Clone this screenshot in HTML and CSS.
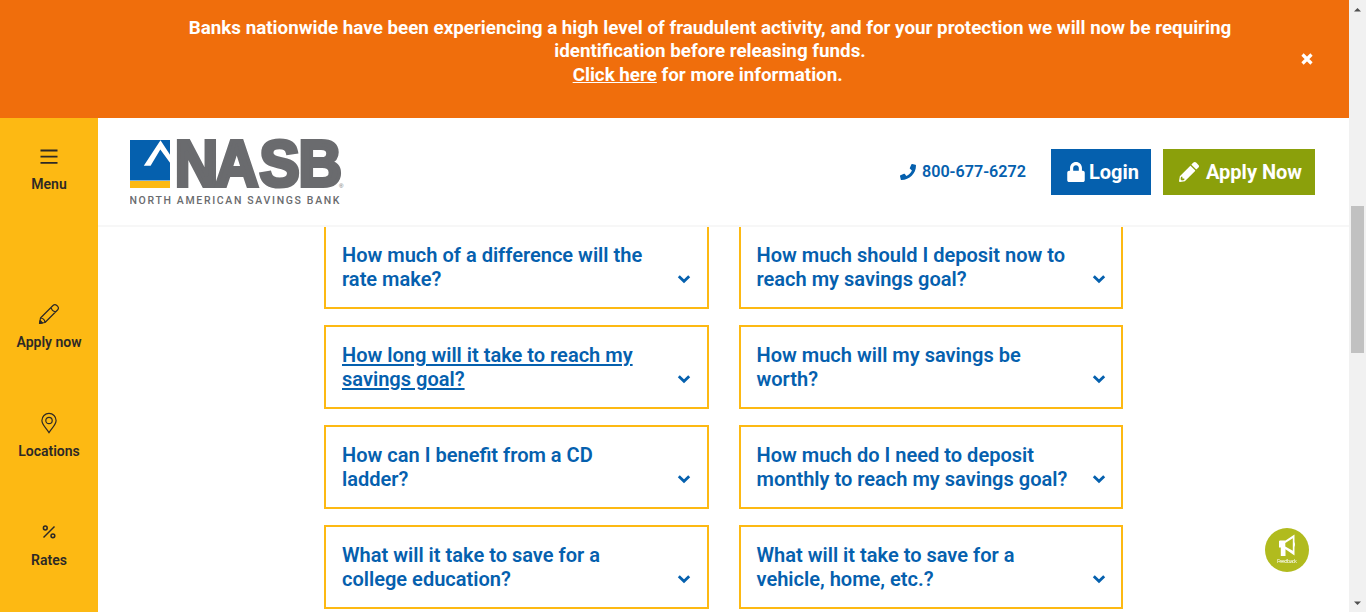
FILE: index.html
```
<!DOCTYPE html>
<html lang="en">
<head>
<meta charset="utf-8">
<title>NASB - North American Savings Bank</title>
<link rel="stylesheet" href="styles.css">
</head>
<body>
<svg class="defs" width="0" height="0">
  <symbol id="chevron" viewBox="0 0 14 10"><path d="M1.800 2.200 7 7.300l5.200-5.100" fill="none" stroke="currentColor" stroke-width="2.800"/></symbol>
</svg>
<div class="page">
  <div class="alert">
    <p class="alert-text">Banks nationwide have been experiencing a high level of fraudulent activity, and for your protection we will now be requiring<br>identification before releasing funds.<br><a class="alert-link" href="#">Click here</a> for more information.&nbsp;</p>
    <button class="alert-close" aria-label="Close"><svg width="12" height="12" viewBox="0 0 12 12"><path d="M1.500 1.500l9 9M10.500 1.500l-9 9" stroke="#fff" stroke-width="3.200"/></svg></button>
  </div>
  <div class="body">
    <nav class="side">
      <a class="side-item side-menu" href="#">
        <svg width="18" height="16" viewBox="0 0 18 16"><path d="M0.500 1.500h17M0.500 7.700h17M0.500 13.900h17" stroke="#2d2926" stroke-width="1.800"/></svg>
        <span>Menu</span>
      </a>
      <a class="side-item" href="#">
        <svg class="side-icon" viewBox="0 0 22 22" fill="none" stroke="#2d2926" stroke-width="1.200" stroke-linejoin="round"><path d="M1.500 20.500l1-5.500L15 2.500a2.700 2.700 0 0 1 3.800 0l.7.700a2.700 2.700 0 0 1 0 3.800L7 19.500zM13.200 4.300c.2 2.600 1.900 4.300 4.500 4.500M2.500 15c2.600.2 4.300 1.900 4.500 4.500"/><path d="M2.100 17.500l2.400 2.400-3 .6z" fill="#2d2926"/></svg>
        <span>Apply now</span>
      </a>
      <a class="side-item" href="#">
        <svg class="side-icon" viewBox="0 0 22 22" fill="none" stroke="#2d2926" stroke-width="1.200"><path d="M11 20.600C8 16 3.900 12.500 3.900 8.500a7.100 7.100 0 0 1 14.200 0c0 4-4.100 7.500-7.100 12.100z"/><circle cx="11" cy="8.500" r="3.200"/></svg>
        <span>Locations</span>
      </a>
      <a class="side-item" href="#">
        <svg class="side-icon" viewBox="0 0 22 22" fill="none" stroke="#2d2926" stroke-width="1.500"><path d="M5.500 16.500l11-11"/><circle cx="7.300" cy="7" r="1.900"/><circle cx="14.900" cy="14.800" r="1.900"/></svg>
        <span>Rates</span>
      </a>
    </nav>
    <div class="main">
      <header class="header">
        <a class="logo" href="#">
          <svg width="216" height="72" viewBox="0 0 216 72">
            <path d="M0 3h40v40.500H0z" fill="#0560ae"/><path d="M0 43.900h40v7H0z" fill="#fdb913"/>
            <path d="M13.800 28.800L30.500 3.200 40 17.800V25.800L30.300 12.500 20.600 28.800z" fill="#fff"/>
            <text class="logo-name" transform="scale(.94 1)" x="47.700 90.400 137.800 179.300" y="49">NASB</text>
            <text class="logo-reg" x="209" y="51">®</text>
            <text class="logo-tag" x="-0.500" y="67" textLength="210">NORTH AMERICAN SAVINGS BANK</text>
          </svg>
        </a>
        <div class="actions">
          <a class="phone" href="#"><svg width="16" height="16" viewBox="0 0 512 512" fill="currentColor"><path d="M493.400 24.600l-104-24c-11.300-2.600-22.900 3.300-27.500 13.900l-48 112c-4.200 9.800-1.400 21.300 6.900 28l60.600 49.600c-36 76.700-98.900 140.500-177.200 177.200l-49.600-60.600c-6.800-8.300-18.200-11.100-28-6.900l-112 48C3.900 366.500-2 378.100.6 389.400l24 104C27.100 504.200 36.700 512 48 512c256.100 0 464-207.500 464-464 0-11.200-7.700-20.900-18.600-23.400z"/></svg><span>800-677-6272</span></a>
          <a class="btn btn-login" href="#"><svg width="18" height="20" viewBox="0 0 448 512" fill="currentColor"><path d="M400 224h-24v-72C376 68.200 307.800 0 224 0S72 68.200 72 152v72H48c-26.500 0-48 21.500-48 48v192c0 26.500 21.500 48 48 48h352c26.500 0 48-21.500 48-48V272c0-26.500-21.500-48-48-48zm-104 0H152v-72c0-39.700 32.300-72 72-72s72 32.300 72 72v72z"/></svg><span>Login</span></a>
          <a class="btn btn-apply" href="#"><svg width="20" height="20" viewBox="0 0 512 512" fill="currentColor"><path d="M497.900 142.100l-46.100 46.100c-4.700 4.700-12.300 4.700-17 0l-111-111c-4.700-4.700-4.700-12.300 0-17l46.100-46.100c18.700-18.700 49.100-18.700 67.900 0l60.100 60.100c18.800 18.700 18.800 49.100 0 67.900zM284.200 99.800L21.600 362.400.4 483.900c-2.900 16.400 11.400 30.600 27.800 27.800l121.500-21.300 262.600-262.600c4.700-4.700 4.700-12.300 0-17l-111-111c-4.800-4.700-12.400-4.700-17.100 0zM88 424h48v36.300l-64.500 11.300-31.100-31.100L51.700 376H88v48z"/></svg><span>Apply Now</span></a>
        </div>
      </header>
      <div class="faq">
        <a class="card card-first" href="#"><span>How much of a difference will the<br>rate make?</span><svg class="chev"><use href="#chevron"/></svg></a>
        <a class="card card-first" href="#"><span>How much should I deposit now to<br>reach my savings goal?</span><svg class="chev"><use href="#chevron"/></svg></a>
        <a class="card card-active" href="#"><span>How long will it take to reach my<br>savings goal?</span><svg class="chev"><use href="#chevron"/></svg></a>
        <a class="card" href="#"><span>How much will my savings be<br>worth?</span><svg class="chev"><use href="#chevron"/></svg></a>
        <a class="card" href="#"><span>How can I benefit from a CD<br>ladder?</span><svg class="chev"><use href="#chevron"/></svg></a>
        <a class="card" href="#"><span>How much do I need to deposit<br>monthly to reach my savings goal?</span><svg class="chev"><use href="#chevron"/></svg></a>
        <a class="card" href="#"><span>What will it take to save for a<br>college education?</span><svg class="chev"><use href="#chevron"/></svg></a>
        <a class="card" href="#"><span>What will it take to save for a<br>vehicle, home, etc.?</span><svg class="chev"><use href="#chevron"/></svg></a>
      </div>
    </div>
  </div>
</div>
<div class="scrollbar">
  <svg width="9" height="5" viewBox="0 0 9 5"><path d="M1 4.500L4.500 1 8 4.500z" fill="#505050"/></svg>
  <div class="thumb"></div>
  <svg class="arrow-down" width="9" height="5" viewBox="0 0 9 5"><path d="M1 .5L4.500 4 8 .5z" fill="#505050"/></svg>
</div>
<a class="feedback" href="#">
  <svg width="44" height="44" viewBox="0 0 44 44">
    <circle cx="22" cy="22" r="22" fill="#b1bb1e"/>
    <path d="M15 12.500h5.500L29.500 6.500V27.500L20.500 21.200V28H15.800V19.500H14V13z" fill="#fff"/>
    <path d="M20.300 15l7.500-4.700v12.500L20.300 18.500z" fill="#b1bb1e"/><path d="M29 14q2 2.500 0 5z" fill="#fff"/>
    <text class="feedback-text" x="12" y="35" textLength="20">Feedback</text>
  </svg>
</a>
</body>
</html>
```
FILE: styles.css
```
* { box-sizing: border-box; }
body {
  margin: 0;
  height: 612px;
  display: flex;
  overflow: hidden;
  background: #fff;
  font-family: Roboto, "Liberation Sans", sans-serif;
}
a { color: inherit; text-decoration: none; }
svg { display: block; flex: none; }
.defs { position: absolute; }
.page { width: 1349px; height: 612px; display: flex; flex-direction: column; }

.alert {
  height: 118px;
  flex: none;
  display: flex;
  padding: 16px 36px 0 119px;
  background: #f06e0c;
  color: #fff;
}
.alert-text {
  flex: 1;
  margin: 0;
  font-size: 18.800px;
  font-weight: 700;
  line-height: 23.500px;
  padding-top: 0.500px;
  text-align: center;
  white-space: nowrap;
}
.alert-link { text-decoration: underline; }
.alert-close { border: 0; padding: 0; margin-top: 37px; height: 12px; background: none; }

.body { flex: 1; min-height: 0; display: flex; }
.side {
  width: 98px;
  flex: none;
  display: flex;
  flex-direction: column;
  padding-top: 31px;
  background: #fdb913;
  color: #2d2926;
  font-size: 14px;
  font-weight: 600;
  line-height: 18px;
}
.side-item {
  height: 109px;
  flex: none;
  display: flex;
  flex-direction: column;
  align-items: center;
  gap: 8px;
}
.side-icon { width: 22px; height: 22px; }
.side-menu { height: 154px; gap: 10px; }

.main { flex: 1; display: flex; flex-direction: column; min-width: 0; }
.header {
  height: 109px;
  flex: none;
  display: flex;
  justify-content: space-between;
  padding: 19px 34px 0 32px;
  border-bottom: 2px solid #f7f7f7;
}
.logo-name { font: 700 64px "Liberation Sans", sans-serif; fill: #6a6b6e; stroke: #6a6b6e; stroke-width: 4px; }
.logo-reg { font: 6px "Liberation Sans", sans-serif; fill: #6a6b6e; }
.logo-tag { font: 500 10.500px Roboto, sans-serif; fill: #6a6b6e; }
.actions { display: flex; align-items: center; height: 46px; margin-top: 12px; }
.phone {
  display: flex;
  align-items: center;
  gap: 6px;
  margin-right: 25px;
  color: #0560ae;
  font-size: 16.150px;
  font-weight: 600;
  line-height: 20px;
  padding-bottom: 1px;
}
.btn {
  display: flex;
  align-items: center;
  height: 46px;
  color: #fff;
  font-size: 20px;
  font-weight: 700;
}
.btn-login { width: 100px; padding-left: 16px; gap: 4px; margin-right: 12px; background: #0560ae; }
.btn-apply { width: 152px; padding-left: 16px; gap: 7px; background: #8ba00b; }

.faq {
  display: grid;
  grid-template-columns: 384.500px 384.500px;
  column-gap: 30px;
  row-gap: 16px;
  padding-left: 226px;
}
.card {
  height: 84px;
  display: flex;
  justify-content: space-between;
  align-items: flex-end;
  padding: 0 15.500px 16px 16px;
  border: 2px solid #fdb913;
  color: #0560ae;
  font-size: 20.040px;
  font-weight: 600;
  line-height: 24px;
  white-space: nowrap;
}
.card-first { height: 82px; border-top: 0; }
.card-active span { text-decoration: underline; }
.chev { width: 14px; height: 10px; margin-bottom: 7px; }

.scrollbar {
  width: 17px;
  height: 612px;
  display: flex;
  flex-direction: column;
  align-items: center;
  padding: 7px 0 6px;
  background: #f1f1f1;
}
.thumb { width: 13px; height: 147px; margin-top: 194px; background: #c1c1c1; }
.arrow-down { margin-top: auto; }
.feedback { position: fixed; left: 1265px; top: 528px; }
.feedback-text { font: 5.500px "Open Sans", sans-serif; fill: #fff; }
```
